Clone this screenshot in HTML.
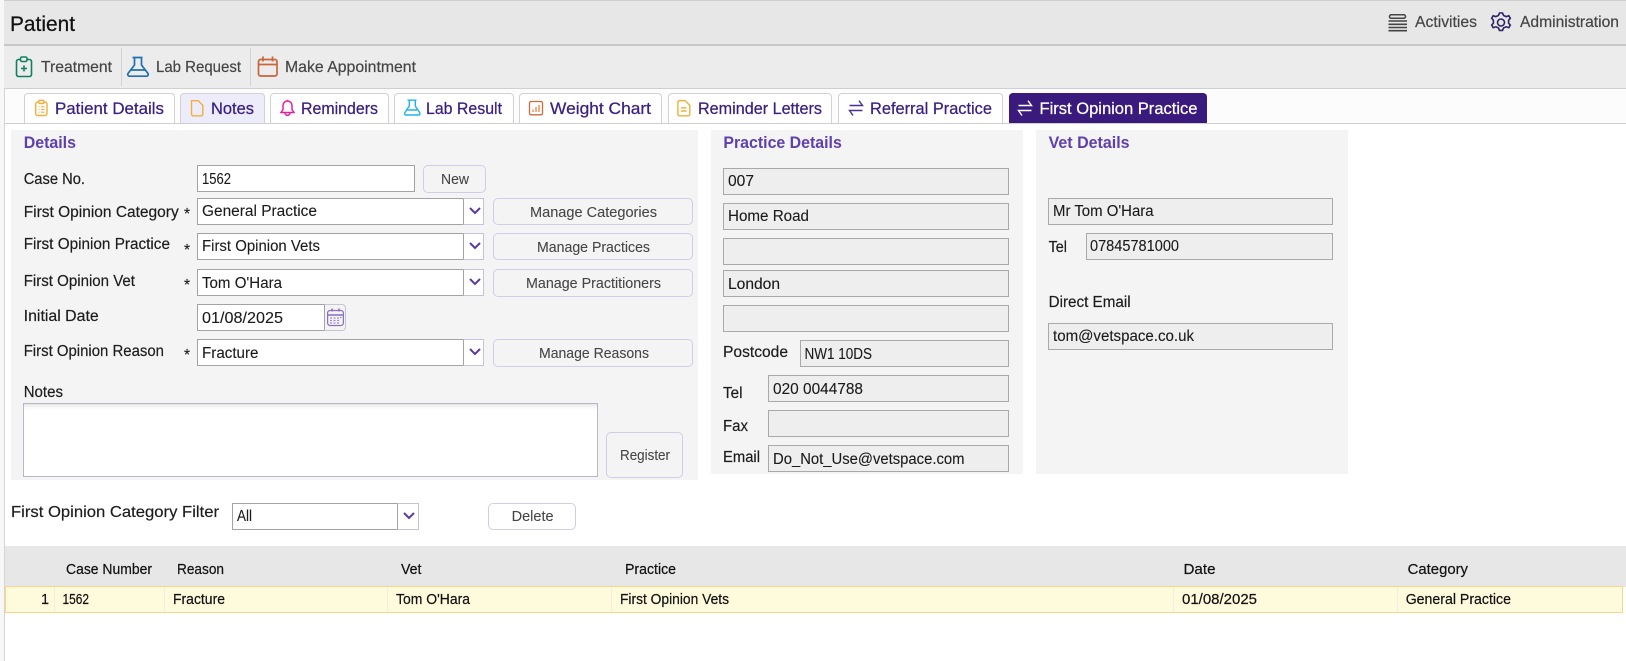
<!DOCTYPE html>
<html><head><meta charset="utf-8"><title>Patient</title>
<style>
html,body{margin:0;padding:0;background:#fff;width:1626px;height:661px;overflow:hidden}
body{position:relative;font-family:"Liberation Sans",sans-serif}
.b{position:absolute;box-sizing:border-box}
.tab{position:absolute;top:93px;height:30px;box-sizing:border-box;background:#fff;border:1px solid #d2d2d2;border-bottom:0;border-radius:4px 4px 0 0}
.inp{position:absolute;box-sizing:border-box;background:#fff;border:1px solid #a3a3a3}
.dis{position:absolute;box-sizing:border-box;background:#eee;border:1px solid #a9a9a9;left:723px;width:286px;height:27px}
.btn{position:absolute;box-sizing:border-box;background:#f4f4f4;border:1px solid #d2cde6;border-radius:5px}
.arr{position:absolute;box-sizing:border-box;background:#fff;border:1px solid #c5c3d8;border-left:1px solid #a3a3a3}
.arr svg{position:absolute;left:5px;top:7px}
.panel{position:absolute;background:#f4f4f4}
svg.ov{position:absolute;left:0;top:0;font-family:"Liberation Sans",sans-serif}
.tabt{font-size:17px;fill:#3a1f80;stroke:#3a1f80;stroke-width:.25px}
.tool{font-size:16px;fill:#454545;stroke:#454545;stroke-width:.2px}
.lab{font-size:15.5px;fill:#1c1c1c;stroke:#1c1c1c;stroke-width:.18px}
.val{font-size:15.5px;fill:#1a1a1a;stroke:#1a1a1a;stroke-width:.1px}
.bt{font-size:14.5px;fill:#454545;stroke:#454545;stroke-width:.08px}
.h{font-size:16.5px;font-weight:bold;fill:#5f3fae}
.tb{font-size:14.5px;fill:#111;stroke:#111;stroke-width:.2px}
</style></head><body>

<!-- chrome -->
<div class="b" style="left:0;top:0;width:4px;height:661px;background:#f7f7f7"></div>
<div class="b" style="left:4px;top:0;width:1px;height:661px;background:#d4d4d4"></div>
<div class="b" style="left:4px;top:0;width:1622px;height:45px;background:#e7e7e7;border-top:1px solid #cfcfcf"></div>
<div class="b" style="left:4px;top:44px;width:1622px;height:2px;background:#c8c8c8"></div>
<div class="b" style="left:4px;top:46px;width:1622px;height:42px;background:#ececec"></div>
<div class="b" style="left:4px;top:88px;width:1622px;height:1px;background:#cfcfcf"></div>
<div class="b" style="left:121px;top:48px;width:1px;height:38px;background:#d2d2d2"></div>
<div class="b" style="left:250px;top:48px;width:1px;height:38px;background:#d2d2d2"></div>

<!-- tabs -->
<div class="b" style="left:5px;top:89px;width:1621px;height:34px;background:#fcfcfc"></div>
<div class="tab" style="left:24px;width:151px"></div>
<div class="tab" style="left:180px;width:85px;background:#ececfa"></div>
<div class="tab" style="left:270px;width:119px"></div>
<div class="tab" style="left:394px;width:120px"></div>
<div class="tab" style="left:519px;width:143px"></div>
<div class="tab" style="left:668px;width:164px"></div>
<div class="tab" style="left:838px;width:165px"></div>
<div class="tab" style="left:1009px;width:198px;background:#3a1a7d;border-color:#3a1a7d"></div>
<div class="b" style="left:5px;top:123px;width:1621px;height:1px;background:#cfcfcf"></div>

<!-- panels -->
<div class="panel" style="left:11px;top:130px;width:687px;height:350px"></div>
<div class="panel" style="left:711px;top:130px;width:312px;height:344px"></div>
<div class="panel" style="left:1036px;top:130px;width:312px;height:344px"></div>

<!-- left form -->
<div class="inp" style="left:197px;top:165px;width:218px;height:27px"></div>
<div class="btn" style="left:423px;top:165px;width:63px;height:28px"></div>

<div class="inp" style="left:197px;top:198px;width:267px;height:27px"></div>
<div class="arr" style="left:463px;top:198px;width:21px;height:27px"><svg width="12" height="10" viewBox="0 0 12 10"><path d="M1 2l5 5 5-5" fill="none" stroke="#5a3a9e" stroke-width="2"/></svg></div>
<div class="btn" style="left:493px;top:198px;width:200px;height:27px"></div>

<div class="inp" style="left:197px;top:233px;width:267px;height:27px"></div>
<div class="arr" style="left:463px;top:233px;width:21px;height:27px"><svg width="12" height="10" viewBox="0 0 12 10"><path d="M1 2l5 5 5-5" fill="none" stroke="#5a3a9e" stroke-width="2"/></svg></div>
<div class="btn" style="left:493px;top:233px;width:200px;height:27px"></div>

<div class="inp" style="left:197px;top:269px;width:267px;height:27px"></div>
<div class="arr" style="left:463px;top:269px;width:21px;height:27px"><svg width="12" height="10" viewBox="0 0 12 10"><path d="M1 2l5 5 5-5" fill="none" stroke="#5a3a9e" stroke-width="2"/></svg></div>
<div class="btn" style="left:493px;top:269px;width:200px;height:28px"></div>

<div class="inp" style="left:197px;top:304px;width:128px;height:27px"></div>
<div class="b" style="left:324px;top:304px;width:22px;height:27px;background:#f4f4f4;border:1px solid #c5c3d8;border-left:1px solid #a3a3a3;border-radius:0 4px 4px 0"></div>
<svg class="b" style="left:325px;top:307px" width="20" height="21" viewBox="0 0 20 21" fill="none" stroke="#8a6fc4" stroke-width="1.2"><rect x="2.6" y="3.5" width="15.8" height="15" rx="2.5"/><path d="M3 8h15M7 1.5v3M14 1.5v3" stroke-width="1.5"/><path d="M5 11h2M8.5 11h2M12 11h2M15 10.5h1.5M5 13.5h2M8.5 13.5h2M12 13.5h2M5 16h2M8.5 16h2M12 16h2" stroke="#a08ad2" stroke-width="1.3"/></svg>

<div class="inp" style="left:197px;top:339px;width:267px;height:27px"></div>
<div class="arr" style="left:463px;top:339px;width:21px;height:27px"><svg width="12" height="10" viewBox="0 0 12 10"><path d="M1 2l5 5 5-5" fill="none" stroke="#5a3a9e" stroke-width="2"/></svg></div>
<div class="btn" style="left:493px;top:339px;width:200px;height:28px"></div>

<div class="b" style="left:23px;top:403px;width:575px;height:74px;background:#fff;border:1px solid #b9b6cc;box-shadow:inset 0 6px 6px -5px #d8d8d8"></div>
<div class="btn" style="left:606px;top:432px;width:77px;height:46px"></div>

<!-- practice fields -->
<div class="dis" style="top:168px"></div>
<div class="dis" style="top:203px"></div>
<div class="dis" style="top:238px"></div>
<div class="dis" style="top:270px"></div>
<div class="dis" style="top:305px"></div>
<div class="dis" style="top:340px;left:800px;width:209px"></div>
<div class="dis" style="top:375px;left:768px;width:241px"></div>
<div class="dis" style="top:410px;left:768px;width:241px"></div>
<div class="dis" style="top:445px;left:768px;width:241px"></div>

<!-- vet fields -->
<div class="dis" style="top:198px;left:1048px;width:285px"></div>
<div class="dis" style="top:233px;left:1086px;width:247px"></div>
<div class="dis" style="top:323px;left:1048px;width:285px"></div>

<!-- filter -->
<div class="inp" style="left:232px;top:503px;width:166px;height:27px"></div>
<div class="arr" style="left:397px;top:503px;width:22px;height:27px"><svg width="12" height="10" viewBox="0 0 12 10"><path d="M1 2l5 5 5-5" fill="none" stroke="#5a3a9e" stroke-width="2"/></svg></div>
<div class="btn" style="left:488px;top:503px;width:88px;height:27px;background:#fff"></div>

<!-- table -->
<div class="b" style="left:5px;top:546px;width:1621px;height:41px;background:#e7e7e7"></div>
<div class="b" style="left:5px;top:586px;width:1618px;height:27px;background:#fefadc;border:1px solid #f8d58a"></div>
<div class="b" style="left:54px;top:587px;width:1px;height:25px;background:#f0eee0"></div>
<div class="b" style="left:164px;top:587px;width:1px;height:25px;background:#f0eee0"></div>
<div class="b" style="left:387px;top:587px;width:1px;height:25px;background:#f0eee0"></div>
<div class="b" style="left:611px;top:587px;width:1px;height:25px;background:#f0eee0"></div>
<div class="b" style="left:1173px;top:587px;width:1px;height:25px;background:#f0eee0"></div>
<div class="b" style="left:1397px;top:587px;width:1px;height:25px;background:#f0eee0"></div>

<!-- icons + text overlay -->
<svg class="ov" width="1626" height="661" viewBox="0 0 1626 661">
<!-- toolbar icons -->
<g fill="none" stroke="#0f8060" stroke-width="1.6"><path d="M20.5 59.5h-2a2 2 0 0 0-2 2v13a2 2 0 0 0 2 2h11a2 2 0 0 0 2-2v-13a2 2 0 0 0-2-2h-2"/><rect x="20.5" y="57" width="6.5" height="4.5" rx="1.5"/><path d="M24 65.5v6M21 68.5h6"/></g>
<g fill="none" stroke="#1f70b0" stroke-width="1.7"><path d="M132.5 57.5h10M134.500 57.500v7.500l-6.500 8.500a1.800 1.800 0 0 0 1.500 2.700h17a1.800 1.800 0 0 0 1.500-2.700l-6.500-8.500v-7.500M131 70h14.500"/></g>
<g fill="none" stroke="#c8663a" stroke-width="1.7"><rect x="258.500" y="59.500" width="18.500" height="16.500" rx="2"/><path d="M263 56.500v5M272.500 56.500v5M258.500 64.500h18.500"/></g>
<!-- header icons -->
<g fill="none" stroke="#444" stroke-width="1.500"><rect x="1389.500" y="14.800" width="16" height="3.500" rx="1.700"/><path d="M1388.500 21h18.500M1388.500 24.300h18.500M1388.500 27.500h18.500M1388.500 30.700h18.500" stroke-width="1.600"/></g>
<g fill="none" stroke="#2d2366" stroke-width="1.600"><path d="M1499.500 13l3 0 1.100 2.500 2.600 1.100 2.600-.9 1.500 2.600-1.700 2 0 2.800 1.700 2-1.500 2.600-2.600-.9-2.600 1.100-1.100 2.500h-3l-1.100-2.500-2.600-1.100-2.600.9-1.500-2.600 1.700-2 0-2.800-1.700-2 1.500-2.600 2.600.9 2.600-1.100z"/><circle cx="1501" cy="22.500" r="3.500"/></g>
<!-- tab icons -->
<g fill="none" stroke="#f5ad3a" stroke-width="1.400"><rect x="35.700" y="102" width="11.300" height="13.500" rx="2"/><rect x="38.800" y="100.300" width="5" height="3.200" rx="1" fill="#fff"/><path d="M38.500 106.800h1M41 106.800h3.500M38.500 109.500h1M41 109.500h3.500M38.500 112.200h1M41 112.200h3.500" stroke-width="1.100"/></g>
<path d="M191.500 100.700h6.800l4.500 4.700v8.800a1.600 1.600 0 0 1-1.600 1.600h-8.100a1.600 1.600 0 0 1-1.600-1.600v-12.500z" fill="none" stroke="#f5ad3a" stroke-width="1.400" stroke-linejoin="round"/>
<g fill="none" stroke="#e6209a" stroke-width="1.500"><path d="M281 112.500l2-3v-4a4.500 4.500 0 0 1 9 0v4l2 3zM287.500 99.800v1.500"/><path d="M285 112.800a2.500 2.500 0 0 0 5 0"/></g>
<g fill="none" stroke="#1cb5e8" stroke-width="1.400"><path d="M407.500 100.200h9M409.300 100.200v5.800l-4.500 6.700a1.500 1.500 0 0 0 1.300 2.300h12.400a1.500 1.500 0 0 0 1.300-2.300l-4.500-6.700v-5.800M407 110h10"/></g>
<g fill="none" stroke="#cf6a3d" stroke-width="1.300"><rect x="529.500" y="101.500" width="13" height="13.300" rx="1.500"/><path d="M533 112v-2.500M536 112v-5M539 112v-7" stroke="#ef8a4a" stroke-width="1.400"/></g>
<g fill="none" stroke="#f5ad3a" stroke-width="1.400"><path d="M679.500 100.700h5.800l4.500 4.700v8.800a1.600 1.600 0 0 1-1.600 1.600h-8.700a1.600 1.600 0 0 1-1.600-1.600v-11.900a1.600 1.600 0 0 1 1.600-1.600zM681 107.800h5.500M681 111h5.500"/></g>
<g fill="none" stroke="#4a3191" stroke-width="1.400"><path d="M849.500 105.500h13l-3.500-4.800M862.500 110.500h-13l3.500 5"/></g>
<g fill="none" stroke="#fff" stroke-width="1.400"><path d="M1018.500 105.500h13l-3.500-4.800M1031.500 110.500h-13l3.500 5"/></g>

<!-- header text -->
<text x="10" y="31" font-size="21" fill="#111" stroke="#111" stroke-width=".25" textLength="65" lengthAdjust="spacingAndGlyphs">Patient</text>
<text class="tool" x="1415" y="27" textLength="62" lengthAdjust="spacingAndGlyphs">Activities</text>
<text class="tool" x="1520" y="27" textLength="99" lengthAdjust="spacingAndGlyphs">Administration</text>
<text class="tool" x="41" y="72" textLength="71" lengthAdjust="spacingAndGlyphs">Treatment</text>
<text class="tool" x="156" y="72" textLength="85" lengthAdjust="spacingAndGlyphs">Lab Request</text>
<text class="tool" x="285" y="72" textLength="131" lengthAdjust="spacingAndGlyphs">Make Appointment</text>

<!-- tabs text -->
<text class="tabt" x="55" y="114" textLength="109" lengthAdjust="spacingAndGlyphs">Patient Details</text>
<text class="tabt" x="211" y="114" textLength="43" lengthAdjust="spacingAndGlyphs">Notes</text>
<text class="tabt" x="301" y="114" textLength="77" lengthAdjust="spacingAndGlyphs">Reminders</text>
<text class="tabt" x="426" y="114" textLength="76" lengthAdjust="spacingAndGlyphs">Lab Result</text>
<text class="tabt" x="550" y="114" textLength="101" lengthAdjust="spacingAndGlyphs">Weight Chart</text>
<text class="tabt" x="698" y="114" textLength="124" lengthAdjust="spacingAndGlyphs">Reminder Letters</text>
<text class="tabt" x="870" y="114" textLength="122" lengthAdjust="spacingAndGlyphs">Referral Practice</text>
<text class="tabt" x="1039.500" y="114" textLength="158" lengthAdjust="spacingAndGlyphs" style="fill:#fff;stroke:#fff">First Opinion Practice</text>

<!-- section headings -->
<text class="h" x="23.700" y="148" textLength="52.300" lengthAdjust="spacingAndGlyphs">Details</text>
<text class="h" x="723.400" y="148" textLength="118.400" lengthAdjust="spacingAndGlyphs">Practice Details</text>
<text class="h" x="1048.600" y="148" textLength="81" lengthAdjust="spacingAndGlyphs">Vet Details</text>

<!-- left labels -->
<text class="lab" x="23.700" y="184" textLength="61.300" lengthAdjust="spacingAndGlyphs">Case No.</text>
<text class="lab" x="23.700" y="217" textLength="155" lengthAdjust="spacingAndGlyphs">First Opinion Category</text>
<text class="lab" x="23.700" y="249" textLength="146.300" lengthAdjust="spacingAndGlyphs">First Opinion Practice</text>
<text class="lab" x="23.700" y="286" textLength="111.300" lengthAdjust="spacingAndGlyphs">First Opinion Vet</text>
<text class="lab" x="23.700" y="321" textLength="75" lengthAdjust="spacingAndGlyphs">Initial Date</text>
<text class="lab" x="23.700" y="356" textLength="140.300" lengthAdjust="spacingAndGlyphs">First Opinion Reason</text>
<text class="lab" x="23.700" y="397" textLength="39.300" lengthAdjust="spacingAndGlyphs">Notes</text>
<text class="lab" x="184" y="219">*</text>
<text class="lab" x="184" y="255">*</text>
<text class="lab" x="184" y="290">*</text>
<text class="lab" x="184" y="360">*</text>

<!-- left values -->
<text class="val" x="202" y="184" textLength="29" lengthAdjust="spacingAndGlyphs">1562</text>
<text class="val" x="202" y="216" textLength="115" lengthAdjust="spacingAndGlyphs">General Practice</text>
<text class="val" x="202" y="251" textLength="118" lengthAdjust="spacingAndGlyphs">First Opinion Vets</text>
<text class="val" x="202" y="288" textLength="80" lengthAdjust="spacingAndGlyphs">Tom O'Hara</text>
<text class="val" x="202" y="323" textLength="81" lengthAdjust="spacingAndGlyphs">01/08/2025</text>
<text class="val" x="202" y="358" textLength="56.500" lengthAdjust="spacingAndGlyphs">Fracture</text>

<!-- buttons -->
<text class="bt" x="441" y="184" textLength="28" lengthAdjust="spacingAndGlyphs">New</text>
<text class="bt" x="530" y="217" textLength="127" lengthAdjust="spacingAndGlyphs">Manage Categories</text>
<text class="bt" x="537" y="252" textLength="113" lengthAdjust="spacingAndGlyphs">Manage Practices</text>
<text class="bt" x="526" y="288" textLength="135" lengthAdjust="spacingAndGlyphs">Manage Practitioners</text>
<text class="bt" x="539" y="358" textLength="110" lengthAdjust="spacingAndGlyphs">Manage Reasons</text>
<text class="bt" x="620" y="460" textLength="50" lengthAdjust="spacingAndGlyphs">Register</text>
<text class="bt" x="511.600" y="521" textLength="42" lengthAdjust="spacingAndGlyphs">Delete</text>

<!-- practice -->
<text class="val" x="728" y="186" textLength="26" lengthAdjust="spacingAndGlyphs">007</text>
<text class="val" x="728" y="221" textLength="81" lengthAdjust="spacingAndGlyphs">Home Road</text>
<text class="val" x="728" y="289" textLength="52" lengthAdjust="spacingAndGlyphs">London</text>
<text class="lab" x="723" y="357" textLength="65" lengthAdjust="spacingAndGlyphs">Postcode</text>
<text class="val" x="804.500" y="359" textLength="67.500" lengthAdjust="spacingAndGlyphs">NW1 10DS</text>
<text class="lab" x="723" y="398" textLength="19.500" lengthAdjust="spacingAndGlyphs">Tel</text>
<text class="val" x="773" y="394" textLength="90" lengthAdjust="spacingAndGlyphs">020 0044788</text>
<text class="lab" x="723" y="431" textLength="25" lengthAdjust="spacingAndGlyphs">Fax</text>
<text class="lab" x="723" y="462" textLength="37" lengthAdjust="spacingAndGlyphs">Email</text>
<text class="val" x="773" y="464" textLength="191.500" lengthAdjust="spacingAndGlyphs">Do_Not_Use@vetspace.com</text>

<!-- vet -->
<text class="val" x="1053" y="216" textLength="100.600" lengthAdjust="spacingAndGlyphs">Mr Tom O'Hara</text>
<text class="lab" x="1048.600" y="252" textLength="18.400" lengthAdjust="spacingAndGlyphs">Tel</text>
<text class="val" x="1090" y="251" textLength="89" lengthAdjust="spacingAndGlyphs">07845781000</text>
<text class="lab" x="1048.600" y="307" textLength="82" lengthAdjust="spacingAndGlyphs">Direct Email</text>
<text class="val" x="1053" y="341" textLength="141" lengthAdjust="spacingAndGlyphs">tom@vetspace.co.uk</text>

<!-- filter -->
<text class="lab" x="11" y="517" textLength="208" lengthAdjust="spacingAndGlyphs" style="font-size:16px">First Opinion Category Filter</text>
<text class="val" x="237" y="521" textLength="15" lengthAdjust="spacingAndGlyphs">All</text>

<!-- table -->
<text class="tb" x="66" y="574" textLength="86" lengthAdjust="spacingAndGlyphs">Case Number</text>
<text class="tb" x="177" y="574" textLength="47" lengthAdjust="spacingAndGlyphs">Reason</text>
<text class="tb" x="401" y="574" textLength="20.400" lengthAdjust="spacingAndGlyphs">Vet</text>
<text class="tb" x="625" y="574" textLength="51" lengthAdjust="spacingAndGlyphs">Practice</text>
<text class="tb" x="1183.500" y="574" textLength="32" lengthAdjust="spacingAndGlyphs">Date</text>
<text class="tb" x="1407.700" y="574" textLength="60.300" lengthAdjust="spacingAndGlyphs">Category</text>
<text class="tb" x="41" y="604">1</text>
<text class="tb" x="62.500" y="604" textLength="26.500" lengthAdjust="spacingAndGlyphs">1562</text>
<text class="tb" x="173" y="604" textLength="52" lengthAdjust="spacingAndGlyphs">Fracture</text>
<text class="tb" x="396" y="604" textLength="74" lengthAdjust="spacingAndGlyphs">Tom O'Hara</text>
<text class="tb" x="620" y="604" textLength="109" lengthAdjust="spacingAndGlyphs">First Opinion Vets</text>
<text class="tb" x="1182" y="604" textLength="75" lengthAdjust="spacingAndGlyphs">01/08/2025</text>
<text class="tb" x="1405.700" y="604" textLength="105.300" lengthAdjust="spacingAndGlyphs">General Practice</text>
</svg>
</body></html>
